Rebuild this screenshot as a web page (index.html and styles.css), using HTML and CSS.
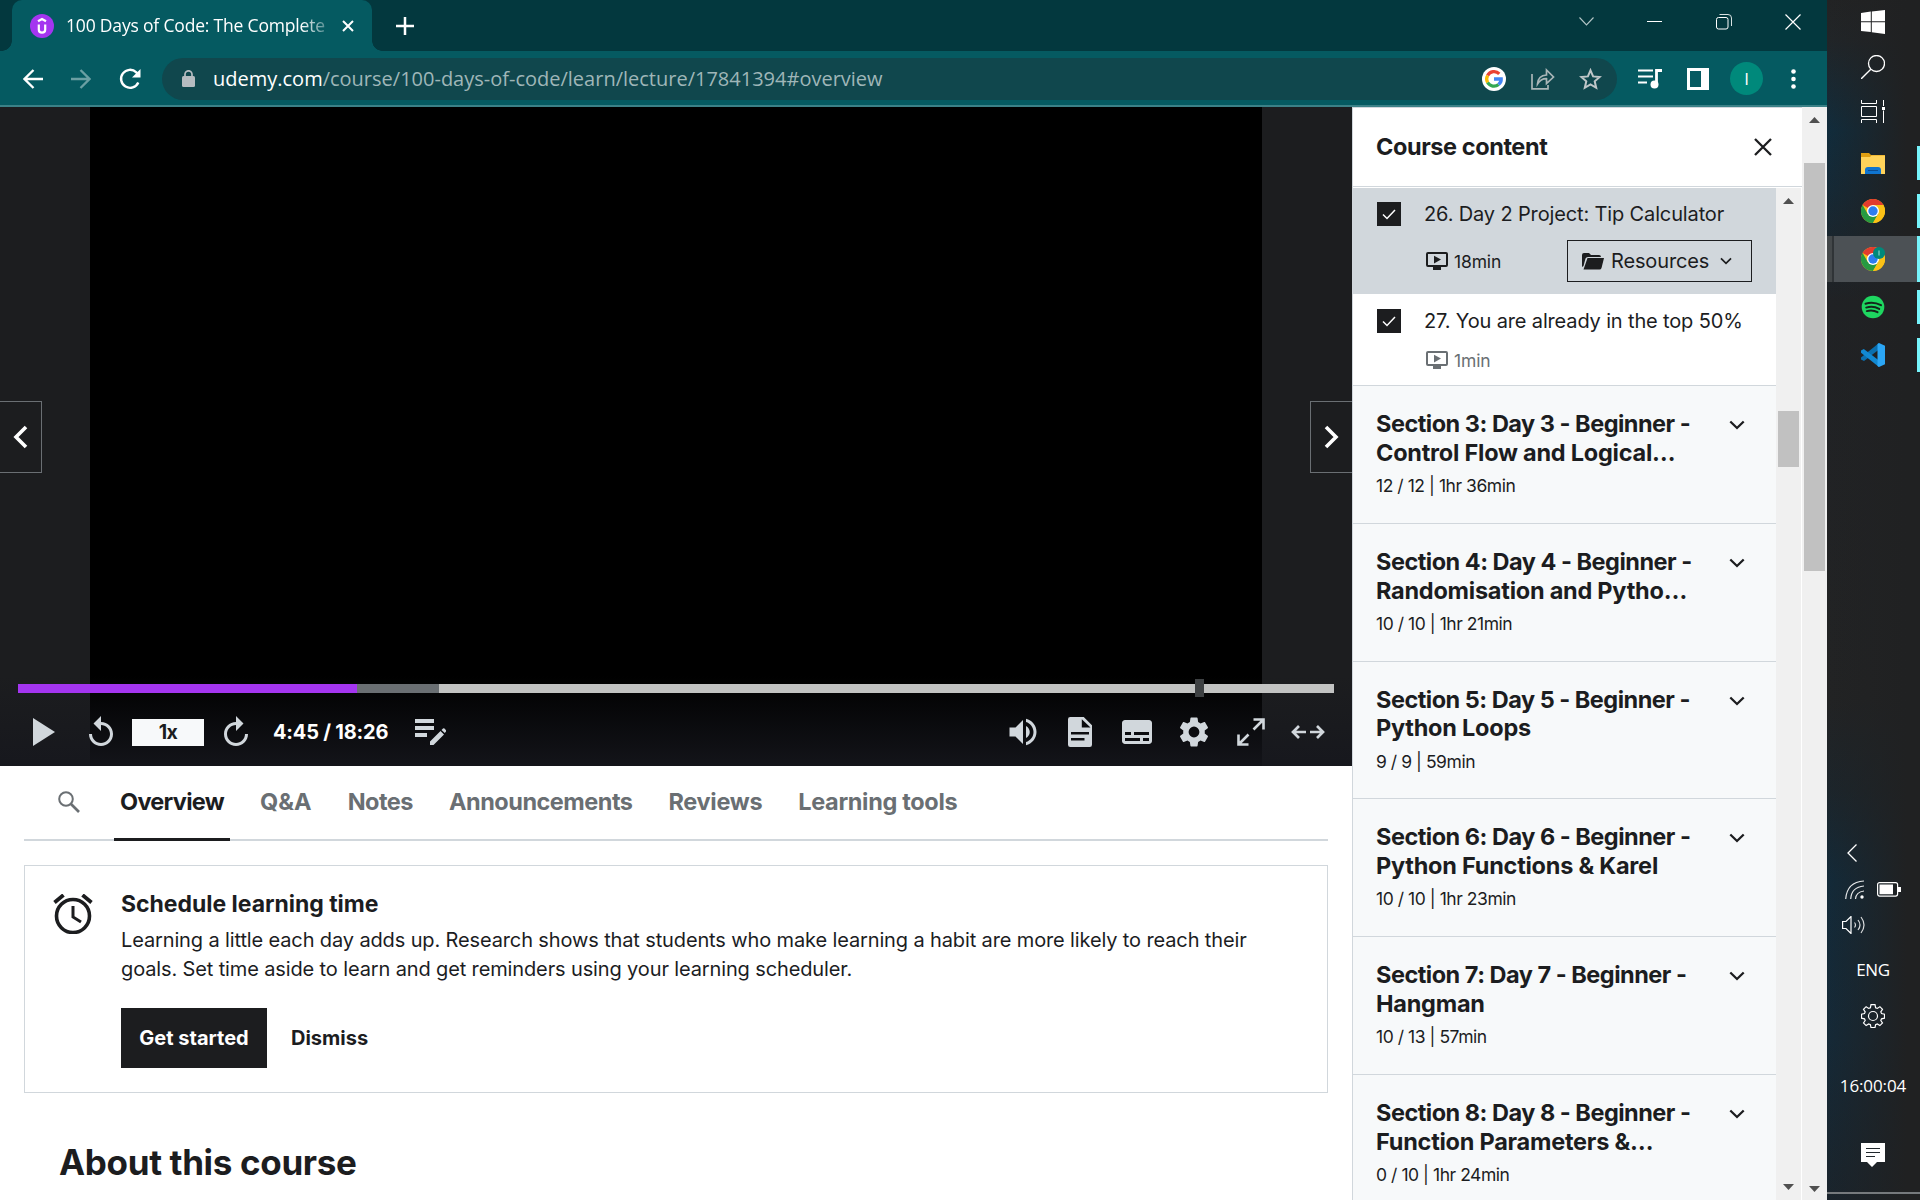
FILE: index.html
```html
<!DOCTYPE html>
<html lang="en">
<head>
<meta charset="utf-8">
<title>100 Days of Code: The Complete Python Bootcamp</title>
<link rel="stylesheet" href="styles.css">
</head>
<body>
<svg width="0" height="0" class="defs" aria-hidden="true">
  <symbol id="chev" viewBox="0 0 16 10"><path d="M1.3 1.5 8 8l6.700-6.500" fill="none" stroke="currentColor" stroke-width="2.300"/></symbol>
  <symbol id="up" viewBox="0 0 11 6"><path d="M0 6 5.500 0 11 6z"/></symbol>
  <symbol id="down" viewBox="0 0 11 6"><path d="M0 0h11L5.500 6z"/></symbol>
  <symbol id="check" viewBox="0 0 24 24"><path d="m6 12.500 4 4 8-8.500" fill="none" stroke="#fff" stroke-width="1.500"/></symbol>
  <symbol id="video" viewBox="0 0 22 18"><path d="M2 1h18q1 0 1 1v11q0 1-1 1H2q-1 0-1-1V2q0-1 1-1z" fill="none" stroke="currentColor" stroke-width="2"/><path d="M7 15h8v3H7zM8 3.800v7.600l7-3.800z" fill="currentColor"/></symbol>
  <symbol id="chrome" viewBox="0 0 24 24"><circle cx="12" cy="12" r="12" fill="#fbc116"/><path d="M12 12 1.600 6A12 12 0 0 1 22.400 6z" fill="#e33b2e"/><path d="M1.600 6A12 12 0 0 0 12 24l5.200-9L12 12l-5.200 3z" fill="#269a42"/><path d="M12 6h10.400A12 12 0 0 1 12 24l5.200-9z" fill="#fbc116"/><circle cx="12" cy="12" r="6" fill="#fff"/><circle cx="12" cy="12" r="4.700" fill="#2d7df0"/></symbol>
</svg>
<div class="desktop">
  <div class="browser">
    <header class="tabstrip">
      <div class="tab">
        <svg class="fav" viewBox="0 0 24 24"><circle cx="12" cy="12" r="12" fill="#a435f0"/><path d="m8 7.300 4-2.300 4 2.300M8.800 10.500v5q0 3.200 3.200 3.200t3.200-3.200v-5" fill="none" stroke="#fff" stroke-width="2.200"/></svg>
        <span class="tab-title">100 Days of Code: The Complete</span>
        <svg class="tab-x" viewBox="0 0 12 12"><path d="m1 1 10 10M11 1 1 11" stroke="#fff" stroke-width="2"/></svg>
      </div>
      <svg class="plus" viewBox="0 0 18 18"><path d="M9 0v18M0 9h18" stroke="#fff" stroke-width="2.500"/></svg>
      <div class="winbtns">
        <svg width="15" height="9" viewBox="0 0 15 9"><path d="M.5.500 7.500 8l7-7.500" fill="none" stroke="#b5c6c7" stroke-width="1.100"/></svg>
        <svg width="15" height="15" viewBox="0 0 15 15"><path d="M0 7.500h15" stroke="#fff"/></svg>
        <svg width="16" height="16" viewBox="0 0 16 16"><rect x=".5" y="3.500" width="11.500" height="11.500" rx="2" fill="none" stroke="#fff"/><path d="M3.500.5H12q3.500 0 3.500 3.500v8" fill="none" stroke="#d8e2e2"/></svg>
        <svg width="16" height="16" viewBox="0 0 16 16"><path d="m.5.500 15 15m0-15-15 15" stroke="#fff" stroke-width="1.200"/></svg>
      </div>
    </header>
    <div class="toolbar">
      <div class="nav">
        <svg width="20" height="20" viewBox="0 0 20 20"><path d="M10.500 1 1.500 10l9 9M1.500 10H20" fill="none" stroke="#fff" stroke-width="2.300"/></svg>
        <svg width="20" height="20" viewBox="0 0 20 20"><path d="m9.500 1 9 9-9 9M18.500 10H0" fill="none" stroke="#6b9fa3" stroke-width="2.300"/></svg>
        <svg width="22" height="22" viewBox="0 0 22 22"><path d="M19.300 14.500a9 9 0 1 1-2-10.200L20 7" fill="none" stroke="#fff" stroke-width="2.400"/><path d="M21.500 1v8.500H13z" fill="#fff"/></svg>
      </div>
      <div class="omnibox">
        <svg class="lock" viewBox="0 0 13 17"><rect y="6" width="13" height="11" rx="1.500" fill="#b6bcc0"/><path d="M3 7V4.300a3.500 3.500 0 0 1 7 0V7" fill="none" stroke="#b6bcc0" stroke-width="1.700"/></svg>
        <span class="url"><b>udemy.com</b>/course/100-days-of-code/learn/lecture/17841394#overview</span>
        <div class="omni-actions">
          <svg width="24" height="24" viewBox="0 0 24 24"><circle cx="12" cy="12" r="12" fill="#fff"/><g fill="none" stroke-width="3.300"><path d="M17.300 6.800A7.300 7.300 0 0 0 5.600 8.500" stroke="#ea4335"/><path d="M5.600 8.500a7.300 7.300 0 0 0 0 7" stroke="#fbbc05"/><path d="M5.600 15.500a7.300 7.300 0 0 0 11 1.900" stroke="#34a853"/><path d="M16.600 17.400q2.800-2.300 2.600-5.400H12" stroke="#4285f4"/></g></svg>
          <svg width="24" height="22" viewBox="0 0 24 22"><path d="M1 6v14.800h16V17M6.500 16Q7 7.500 15.500 7V2l7 7-7 6.500v-4.800q-5.500-.2-9 5.300z" fill="none" stroke="#a9b6b8" stroke-width="1.700"/></svg>
          <svg width="23" height="22" viewBox="0 0 23 22"><path d="m11.500 2.300 2.600 6.100 6.600.6-5 4.300 1.500 6.500-5.700-3.400-5.700 3.400 1.500-6.500-5-4.300 6.600-.6z" fill="none" stroke="#bfc6c8" stroke-width="2"/></svg>
        </div>
      </div>
      <div class="ext">
        <svg width="24" height="20" viewBox="0 0 24 20"><path d="M0 1.500h15M0 7.500h15M0 13.500h9" stroke="#fff" stroke-width="2.200"/><path d="M18.500 16V1.500H24" fill="none" stroke="#fff" stroke-width="2.800"/><circle cx="16.500" cy="15.500" r="4" fill="#fff"/></svg>
        <svg width="22" height="22" viewBox="0 0 22 22"><path fill-rule="evenodd" d="M0 0h22v22H0zM3 3v16h11V3z" fill="#fff"/></svg>
        <span class="avatar">I</span>
        <svg width="5" height="20" viewBox="0 0 5 20"><circle cx="2.500" cy="2.500" r="2.300" fill="#fff"/><circle cx="2.500" cy="10" r="2.300" fill="#fff"/><circle cx="2.500" cy="17.500" r="2.300" fill="#fff"/></svg>
      </div>
    </div>
    <div class="page">
      <main class="main">
        <section class="player">
          <div class="video"></div>
          <div class="shade"></div>
          <button class="side prev"><svg viewBox="0 0 15 24"><path d="M13 2 3 12l10 10" fill="none" stroke="#fff" stroke-width="3.600"/></svg></button>
          <button class="side next"><svg viewBox="0 0 15 24"><path d="m2 2 10 10L2 22" fill="none" stroke="#fff" stroke-width="3.600"/></svg></button>
          <div class="progress"><i class="buffered"></i><i class="played"></i><i class="marker"></i></div>
          <div class="controls">
            <div class="ctl-left">
              <svg class="play" viewBox="0 0 22 28"><path d="M0 0v28l22-14z"/></svg>
              <svg class="rew" viewBox="4 1 16 20"><path d="M12 5V1L7 6l5 5V7c3.310 0 6 2.690 6 6s-2.690 6-6 6-6-2.690-6-6H4c0 4.420 3.580 8 8 8s8-3.580 8-8-3.580-8-8-8z"/></svg>
              <span class="rate">1x</span>
              <svg class="fwd" viewBox="4 1 16 20"><path d="M12 5V1l5 5-5 5V7c-3.310 0-6 2.690-6 6s2.690 6 6 6 6-2.690 6-6h2c0 4.420-3.580 8-8 8s-8-3.580-8-8 3.580-8 8-8z"/></svg>
              <span class="time">4:45 / 18:26</span>
              <svg class="note" viewBox="0 0 31 26"><path d="M0 0h19v4H0zM0 7h19v4H0zM0 14h12v4H0zM15 22.500 25.500 12l3.500 3.500L18.500 26H15zM26.500 11l1.500-1.500q.8-.5 1.500 0l1.500 1.700q.4.600 0 1.200L29.800 14z"/></svg>
            </div>
            <div class="ctl-right">
              <svg width="36" height="36" viewBox="0 0 24 24"><path d="M3 9v6h4l5 5V4L7 9H3zm13.500 3c0-1.770-1.020-3.290-2.500-4.030v8.050c1.480-.73 2.500-2.250 2.500-4.020zM14 3.230v2.060c2.890.86 5 3.540 5 6.710s-2.110 5.850-5 6.710v2.060c4.010-.91 7-4.490 7-8.770s-2.990-7.860-7-8.770z"/></svg>
              <svg width="36" height="36" viewBox="0 0 24 24"><path fill-rule="evenodd" d="M14.500 2H5.500Q4 2 4 3.500v17Q4 22 5.500 22h13q1.500 0 1.500-1.500V7.500zM13.200 3.500V9H19zM6 12h12v1.700H6zM6 16h9v1.700H6z"/></svg>
              <svg width="36" height="36" viewBox="0 0 24 24"><path fill-rule="evenodd" d="M20 4H4c-1.100 0-2 .9-2 2v12c0 1.100.9 2 2 2h16c1.100 0 2-.9 2-2V6c0-1.100-.9-2-2-2zM4 12h4v2H4zm10 6H4v-2h10zm6 0h-4v-2h4zm0-4H10v-2h10z"/></svg>
              <svg width="36" height="36" viewBox="0 0 24 24"><path d="M19.140 12.940c.04-.3.060-.61.060-.94s-.02-.64-.07-.94l2.030-1.580c.18-.14.230-.41.120-.61l-1.920-3.320c-.12-.22-.37-.29-.59-.22l-2.390.960c-.5-.38-1.030-.7-1.620-.94l-.36-2.540c-.04-.24-.24-.41-.48-.41h-3.840c-.24 0-.43.170-.47.410l-.36 2.540c-.59.240-1.130.57-1.620.94l-2.390-.96c-.22-.08-.47 0-.59.220L2.740 8.870c-.12.210-.08.470.12.610l2.030 1.580c-.05.300-.09.630-.09.940s.02.640.070.940l-2.030 1.580c-.18.140-.23.410-.12.610l1.920 3.320c.12.220.37.290.59.220l2.390-.96c.5.380 1.030.7 1.620.94l.36 2.540c.05.240.24.410.48.410h3.840c.24 0 .44-.17.470-.41l.36-2.540c.59-.24 1.130-.56 1.620-.94l2.390.96c.22.080.47 0 .59-.22l1.920-3.320c.12-.22.070-.47-.12-.61zM12 15.600A3.600 3.600 0 1 1 12 8.400a3.600 3.600 0 0 1 0 7.200z"/></svg>
              <svg width="36" height="36" viewBox="0 0 36 36"><path d="M20.500 5.500h10v10M30 6l-9.500 9.500M5.500 20.500v10h10M6 30l9.500-9.500" fill="none" stroke="#d1d7dc" stroke-width="2.600"/></svg>
              <svg width="36" height="36" viewBox="0 0 36 36"><path d="m9 12-6 6 6 6M3 18h13M27 12l6 6-6 6M33 18H20" fill="none" stroke="#d1d7dc" stroke-width="2.700"/></svg>
            </div>
          </div>
        </section>
        <nav class="tabs">
          <svg class="search" viewBox="0 0 22 22"><circle cx="8" cy="8" r="6.800" fill="none" stroke="#6a6f73" stroke-width="2"/><path d="m13 13 8 8" stroke="#6a6f73" stroke-width="2.600"/></svg>
          <span class="on">Overview</span><span class="qa">Q&amp;A</span><span>Notes</span><span>Announcements</span><span class="wide">Reviews</span><span class="wide">Learning tools</span>
        </nav>
        <section class="card">
          <svg class="alarm" viewBox="0 0 40 40"><circle cx="20" cy="22" r="16.500" fill="none" stroke="#1c1d1f" stroke-width="3.600"/><path d="M20 12v11l8 5" fill="none" stroke="#1c1d1f" stroke-width="3"/><path d="m1.500 8.500 9-7.500M38.500 8.500l-9-7.500" stroke="#1c1d1f" stroke-width="3.800"/></svg>
          <div>
            <h3>Schedule learning time</h3>
            <p>Learning a little each day adds up. Research shows that students who make learning a habit are more likely to reach their<br>goals. Set time aside to learn and get reminders using your learning scheduler.</p>
            <div class="btns"><button class="primary">Get started</button><button class="ghost">Dismiss</button></div>
          </div>
        </section>
        <h2>About this course</h2>
      </main>
      <aside class="panel">
        <div class="panel-head"><span>Course content</span><svg width="18" height="18" viewBox="0 0 18 18"><path d="m1 1 16 16M17 1 1 17" stroke="#1c1d1f" stroke-width="2.300"/></svg></div>
        <div class="panel-body">
          <div class="list">
            <div class="item current">
              <svg class="box"><use href="#check"/></svg>
              <div class="info"><span class="name">26. Day 2 Project: Tip Calculator</span>
                <div class="meta"><svg class="vid"><use href="#video"/></svg><span>18min</span>
                  <span class="res"><svg width="22" height="17" viewBox="0 0 22 17"><path d="M0 14V2q0-2 2-2h5l2 2h8q2 0 2 2H6Q4 4 3.500 5.500L1.500 13zM5.500 5H22l-2.500 10q-.5 1.500-2 1.500H1.500z" fill="#1c1d1f"/></svg>Resources<svg class="rchev"><use href="#chev"/></svg></span></div></div>
            </div>
            <div class="item">
              <svg class="box"><use href="#check"/></svg>
              <div class="info"><span class="name n27">27. You are already in the top 50%</span>
                <div class="meta grey"><svg class="vid"><use href="#video"/></svg><span>1min</span></div></div>
            </div>
            <div class="sec"><h4>Section 3: Day 3 - Beginner -<br><em>Control Flow and Logical…</em></h4><svg class="chev"><use href="#chev"/></svg><small>12 / 12 | 1hr 36min</small></div>
            <div class="sec"><h4>Section 4: Day 4 - Beginner -<br><em>Randomisation and Pytho…</em></h4><svg class="chev"><use href="#chev"/></svg><small>10 / 10 | 1hr 21min</small></div>
            <div class="sec"><h4>Section 5: Day 5 - Beginner -<br><em>Python Loops</em></h4><svg class="chev"><use href="#chev"/></svg><small>9 / 9 | 59min</small></div>
            <div class="sec"><h4>Section 6: Day 6 - Beginner -<br><em>Python Functions &amp; Karel</em></h4><svg class="chev"><use href="#chev"/></svg><small>10 / 10 | 1hr 23min</small></div>
            <div class="sec"><h4>Section 7: Day 7 - Beginner -<br><em>Hangman</em></h4><svg class="chev"><use href="#chev"/></svg><small>10 / 13 | 57min</small></div>
            <div class="sec"><h4>Section 8: Day 8 - Beginner -<br><em>Function Parameters &amp;…</em></h4><svg class="chev"><use href="#chev"/></svg><small>0 / 10 | 1hr 24min</small></div>
          </div>
          <div class="sb inner"><svg><use href="#up"/></svg><i></i><svg><use href="#down"/></svg></div>
        </div>
      </aside>
      <div class="sb outer"><svg><use href="#up"/></svg><i></i><svg><use href="#down"/></svg></div>
    </div>
  </div>
  <aside class="taskbar">
    <div class="sys">
      <svg width="24" height="24" viewBox="0 0 24 24"><path d="M0 3 9.800 1.600v9.700H0zM10.800 1.500 24 0v11.300H10.800zM0 12.300h9.800v9.800L0 21zM10.800 12.300H24V24l-13.200-1.700z" fill="#fff"/></svg>
      <svg width="24" height="24" viewBox="0 0 24 24"><circle cx="15.500" cy="8.500" r="8" fill="none" stroke="#fff" stroke-width="1.300"/><path d="m0 24 9.800-9.800" stroke="#fff" stroke-width="1.400"/></svg>
      <svg width="24" height="23" viewBox="0 0 24 23"><path d="M.5 0v3.500h15V0M.5 6.500h15v10H.5zM.5 23v-3.500h15V23M22.500 0v6M22.500 10.500V23" fill="none" stroke="#fff"/><path d="M21 7h3v3h-3z" fill="#fff"/></svg>
    </div>
    <div class="apps">
      <div class="app"><svg width="24" height="21" viewBox="0 0 24 21"><path d="M0 0h8l2 2h14v6H0z" fill="#e09f12"/><path d="M0 4h9l1.500-1.500H24V21H0z" fill="#ffd35a"/><path d="M4 21v-4q0-3 3-3h10q3 0 3 3v4z" fill="#0f74cf"/><path d="M7 17.500h10" stroke="#0a4c92"/></svg></div>
      <div class="app"><svg width="24" height="24"><use href="#chrome"/></svg></div>
      <div class="app active"><svg width="24" height="24" viewBox="0 0 24 24"><use href="#chrome"/><circle cx="18" cy="6" r="6" fill="#00897b"/><path d="M18 3.500v5" stroke="#7cc9c1" stroke-width="1.300"/></svg></div>
      <div class="app"><svg width="24" height="24" viewBox="0 0 24 24"><circle cx="12" cy="12" r="11.300" fill="#1ed760"/><path d="M4.500 8.700q8-2.500 15.500 1.500M5.200 12.600q7-2 13 1.300M5.800 16.100q6-1.500 10.700 1.100" fill="none" stroke="#14261b" stroke-width="2" stroke-linecap="round"/></svg></div>
      <div class="app"><svg width="24" height="24" viewBox="0 0 24 24"><path d="M18 0v6.500L3 18 0 16.500v-2z" fill="#0b6fae"/><path d="M0 7.500 2.800 6 18 17.500V24L0 9.700z" fill="#1289d2"/><path d="M18 0l6 2.800v18.400L18 24l-1.500-1V1z" fill="#2ba6f5"/></svg></div>
    </div>
    <div class="tray">
      <svg class="t-left" viewBox="0 0 10 18"><path d="M9.500.5 1 9l8.500 8.500" fill="none" stroke="#fff" stroke-width="1.300"/></svg>
      <div class="t-row">
        <svg width="19" height="19" viewBox="0 0 19 19"><g fill="none" stroke="#e6e8e9" stroke-width="1.200"><path d="M.7 19Q2 2 19 1"/><path d="M5.700 19Q6.500 7 19 6"/><path d="M10.500 19Q11 12 19 11"/></g><circle cx="17" cy="17" r="1.700" fill="#fff"/></svg>
        <svg width="24" height="15" viewBox="0 0 24 15"><rect x=".6" y=".6" width="20" height="13.500" rx="2" fill="none" stroke="#fff" stroke-width="1.200"/><path d="M2.500 2.500H16v9.700H2.500zM21 5h3v5h-3z" fill="#fff"/></svg>
      </div>
      <svg class="t-vol" viewBox="0 0 23 18"><path d="M.6 5.500v7H4l5 5V.5l-5 5z" fill="none" stroke="#fff" stroke-width="1.200"/><path d="M12.500 6.500q2 2.500 0 5M16 4q4 5 0 10M19 1q6 8 0 16" fill="none" stroke="#dadcdd" stroke-width="1.200"/></svg>
      <span class="t-lang">ENG</span>
      <svg class="t-gear" viewBox="0 0 24 24"><path d="M10 .7h4l.6 3 1.700.7 2.600-1.700 2.600 2.600-1.700 2.600.7 1.600 3 .7v4l-3 .6-.7 1.700 1.700 2.500-2.600 2.600-2.600-1.700-1.700.7-.6 3h-4l-.6-3-1.700-.7-2.600 1.700-2.600-2.600 1.700-2.500-.7-1.700-3-.6v-4l3-.7.700-1.600-1.700-2.600 2.600-2.600 2.600 1.700 1.700-.7z" fill="none" stroke="#fff" stroke-width="1.200"/><circle cx="12" cy="12" r="4.500" fill="none" stroke="#fff" stroke-width="1.200"/></svg>
      <span class="t-time">16:00:04</span>
      <svg class="t-note" viewBox="0 0 24 24"><path d="M0 0h24v19h-8l-5 5-5-5H0z" fill="#fff"/><path d="M5 5.500h14M5 9.500h14M5 13.500h9" stroke="#20272c"/></svg>
    </div>
  </aside>
</div>
</body>
</html>
```
FILE: styles.css
```css
* { box-sizing: border-box; }
body { margin: 0; font-family: Inter, "Liberation Sans", sans-serif; color: #1c1d1f; }
svg { display: block; flex: none; }
.defs { position: absolute; }
button { font: inherit; border: 0; padding: 0; }
h2, h3, h4, p { margin: 0; }
.desktop { display: flex; width: 1920px; height: 1200px; overflow: hidden; }
.browser { width: 1827px; display: flex; flex-direction: column; }

/* window chrome */
.tabstrip { height: 51px; background: #03383e; display: flex; align-items: center; padding-left: 12px; font-family: "Open Sans", sans-serif; }
.tab { position: relative; width: 360px; height: 51px; background: #055a61; border-radius: 10px 10px 0 0; display: flex; align-items: center; padding-left: 18px; }
.tab::before, .tab::after { content: ""; position: absolute; bottom: 0; width: 10px; height: 10px; }
.tab::before { left: -10px; background: radial-gradient(circle at 0 0, transparent 9.5px, #055a61 10px); }
.tab::after { right: -10px; background: radial-gradient(circle at 100% 0, transparent 9.5px, #055a61 10px); }
.fav { width: 24px; height: 24px; }
.tab-title { margin: -2px 0 0 12px; width: 260px; white-space: nowrap; overflow: hidden; font-size: 17.5px; letter-spacing: -.18px; color: #fff; -webkit-mask-image: linear-gradient(90deg, #000 235px, rgba(0,0,0,.3) 260px); }
.tab-x { width: 12px; height: 12px; margin-left: 16px; }
.plus { width: 18px; height: 18px; margin-left: 24px; }
.winbtns { margin-left: auto; display: flex; align-items: center; gap: 53.5px; padding-right: 26px; height: 43px; align-self: flex-start; }
.toolbar { height: 56px; background: #055a61; border-bottom: 2px solid #3b8187; display: flex; align-items: center; padding: 1px 0 0 23px; }
.nav { display: flex; gap: 28px; width: 139px; align-items: center; }
.omnibox { width: 1455px; height: 42px; border-radius: 21px; background: #10474d; display: flex; align-items: center; padding: 0 15px 0 20px; font-family: "Open Sans", sans-serif; }
.lock { width: 13px; height: 17px; }
.url { margin-left: 18px; font-size: 20px; color: #9fb6b8; white-space: nowrap; }
.url b { font-weight: 400; color: #fff; }
.omni-actions { margin-left: auto; display: flex; gap: 24.500px; align-items: center; }
.ext { display: flex; align-items: center; gap: 24px; margin-left: 21px; }
.ext svg:nth-child(2) { margin-left: 1px; }
.avatar { width: 33px; height: 33px; margin-left: -3px; border-radius: 50%; background: #00897b; color: #fff; font: 17px/33px "Open Sans", sans-serif; text-align: center; }
.ext svg:last-child { margin-left: 4px; }
.page { height: 1093px; display: flex; background: #fff; }
.main { width: 1352px; overflow: hidden; }

/* player */
.player { position: relative; height: 659px; background: #1c1d1f; }
.video { width: 1172px; height: 659px; margin-left: 90px; background: #000; }
.shade { position: absolute; left: 0; right: 0; bottom: 0; height: 90px; background: linear-gradient(rgba(22,23,29,0), rgba(22,23,29,.88)); }
.side { position: absolute; top: 294px; width: 42px; height: 72px; background: #1c1d1f; border: 1px solid #6a6f73; display: grid; place-items: center; }
.side svg { width: 15px; height: 24px; }
.prev { left: 0; border-left: 0; }
.next { right: 0; border-right: 0; }
.progress { position: absolute; left: 18px; top: 577px; width: 1316px; height: 9px; background: #c2c3c2; }
.progress i { position: absolute; left: 0; top: 0; height: 9px; }
.buffered { width: 421px; background: #6a6f73; }
.played { width: 339px; background: #a435f0; }
.progress .marker { left: 1177px; top: -5px; width: 9px; height: 18px; background: #3e4143; }
.controls { position: absolute; left: 33px; right: 26px; top: 607px; height: 36px; display: flex; justify-content: space-between; align-items: center; fill: #d1d7dc; }
.ctl-left, .ctl-right { display: flex; align-items: center; }
.ctl-right { gap: 21px; }
.play { width: 22px; height: 28px; }
.rew, .fwd { width: 24px; height: 30px; margin-top: -2px; }
.rew { margin-left: 34px; }
.rate { width: 72px; height: 27px; margin: 0 20px 0 19px; background: #f7f9fa; font-weight: 700; font-size: 19.5px; line-height: 27px; text-align: center; letter-spacing: -.6px; }
.time { margin-left: 25px; width: 117px; color: #fff; font-weight: 700; font-size: 20px; letter-spacing: -.2px; white-space: nowrap; }
.note { width: 31px; height: 26px; margin-left: 25px; }

/* tabs and card */
.tabs { margin: 0 24px; height: 75px; border-bottom: 2px solid #d1d7dc; display: flex; align-items: flex-start; gap: 36px; padding-left: 34px; font-weight: 700; font-size: 23.5px; line-height: 72px; letter-spacing: -.5px; color: #6a6f73; white-space: nowrap; }
.search { width: 22px; height: 22px; margin: 25px 4px 0 0; }
.tabs .on { position: relative; color: #1c1d1f; letter-spacing: -.72px; }
.tabs .on::after { content: ""; position: absolute; left: -6px; right: -6px; bottom: -3px; height: 3px; background: #1c1d1f; }
.tabs .qa { letter-spacing: 0; }
.tabs .wide { letter-spacing: -.33px; }
.card { margin: 24px 24px 0; height: 228px; border: 1px solid #d1d7dc; display: flex; padding: 23px 0 0 28px; }
.alarm { width: 40px; height: 40px; margin: 5px 28px 0 0; }
.card h3 { font-size: 23px; line-height: 30px; letter-spacing: -.03px; }
.card p { margin-top: 7px; font-size: 20px; line-height: 28.500px; letter-spacing: -.13px; white-space: nowrap; }
.btns { display: flex; align-items: center; gap: 24px; margin-top: 25px; font-weight: 700; font-size: 20px; letter-spacing: -.02px; }
.primary { width: 146px; height: 60px; background: #1c1d1f; color: #fff; }
.ghost { background: none; color: #1c1d1f; }
h2 { margin: 45px 0 0 59px; font-size: 35px; line-height: 48px; letter-spacing: -.33px; }

/* course content */
.panel { width: 450px; border-left: 1px solid #d1d7dc; display: flex; flex-direction: column; overflow: hidden; }
.panel-head { height: 80px; flex: none; border-top: 1px solid #d1d7dc; border-bottom: 1px solid #d1d7dc; display: flex; align-items: center; justify-content: space-between; padding: 0 30px 0 23px; font-weight: 700; font-size: 23.5px; letter-spacing: -.42px; }
.panel-head span { padding-bottom: 1px; }
.panel-body { display: flex; height: 1012px; margin-top: 1px; }
.list { width: 423px; overflow: hidden; }
.item { display: flex; height: 91px; padding: 15px 0 0 24px; font-size: 20px; letter-spacing: -.14px; }
.current { height: 106px; padding-top: 14px; background: #d1d7dc; }
.box { width: 24px; height: 24px; background: #1c1d1f; }
.info { margin-left: 23px; width: 328px; }
.name { display: block; line-height: 24px; white-space: nowrap; }
.n27 { letter-spacing: -.15px; }
.meta { display: flex; align-items: center; font-size: 17.5px; height: 42px; margin-top: 14px; }
.vid { width: 22px; height: 18px; margin: 0 6px 0 2px; }
.meta.grey { color: #6a6f73; height: 28px; margin-top: 13px; }
.res { margin-left: auto; width: 185px; height: 42px; border: 1px solid #1c1d1f; display: flex; align-items: center; gap: 7px; padding-left: 14px; font-size: 20px; }
.rchev { width: 12px; height: 8px; margin-left: 4px; }
.sec { height: 137.800px; border-top: 1px solid #d1d7dc; background: #f7f9fa; display: grid; grid-template-columns: 362px 16px; padding: 24px 0 0 23px; align-content: start; }
.sec h4 { font-size: 23.5px; line-height: 28.800px; letter-spacing: -.5px; white-space: nowrap; }
.sec em { font-style: normal; letter-spacing: -.24px; }
.chev { width: 16px; height: 10px; margin: 10px 0 0 -9px; }
.sec small { font-size: 17.500px; line-height: 24px; margin-top: 6.500px; letter-spacing: -.45px; }

/* scrollbars */
.sb { width: 25px; background: #f0f0f0; display: flex; flex-direction: column; align-items: center; fill: #505050; }
.sb svg { width: 11px; height: 6px; }
.sb i { width: 21px; background: #c1c1c1; }
.sb svg:last-child { margin-top: auto; }
.inner { padding: 10px 0; }
.inner i { height: 56px; margin-top: 207px; }
.outer { padding: 10px 0 8px; }
.outer i { height: 408px; margin-top: 40px; }

/* taskbar */
.taskbar { width: 93px; background: linear-gradient(90deg, rgba(32,33,34,0), #202122 85%), linear-gradient(#222324 0, #212528 40px, #112c3c 130px, #152936 190px, #202225 300px, #222324 700px, #1c252b 790px, #132a39 880px, #152937 1040px, #1a242c 1200px); display: flex; flex-direction: column; }
.sys { height: 140px; display: flex; flex-direction: column; align-items: center; padding: 10px 1px 0 0; gap: 21px; }
.app { height: 46px; margin-bottom: 2px; padding-right: 1px; position: relative; display: grid; place-items: center; }
.app::after { content: ""; position: absolute; right: 0; top: 6px; width: 3px; height: 34px; background: #76f4fc; }
.active { background: #4c5155; box-shadow: inset 5px 0 #44484a, inset 7px 0 #303437; }
.active::after { top: 0; height: 46px; }
.tray { display: flex; flex-direction: column; margin-top: 462px; height: 352px; padding-right: 1px; color: #fff; font-family: "Open Sans", sans-serif; white-space: nowrap; border-bottom: 2px solid #767a7d; }
.t-left { width: 10px; height: 18px; margin: 2px 0 0 20px; }
.t-row { display: flex; align-items: center; gap: 13px; margin: 18px 0 0 18px; }
.t-row svg:last-child { margin-top: -1px; }
.t-vol { width: 23px; height: 18px; margin: 17px 0 0 15px; }
.t-lang { font-size: 17px; line-height: 24px; margin-top: 24px; text-align: center; letter-spacing: -.4px; }
.t-gear { width: 24px; height: 24px; margin: 22px auto 0; }
.t-time { font-size: 17px; line-height: 24px; margin-top: 46px; text-align: center; letter-spacing: -.1px; }
.t-note { width: 24px; height: 24px; margin: 45px auto 0; }
```
